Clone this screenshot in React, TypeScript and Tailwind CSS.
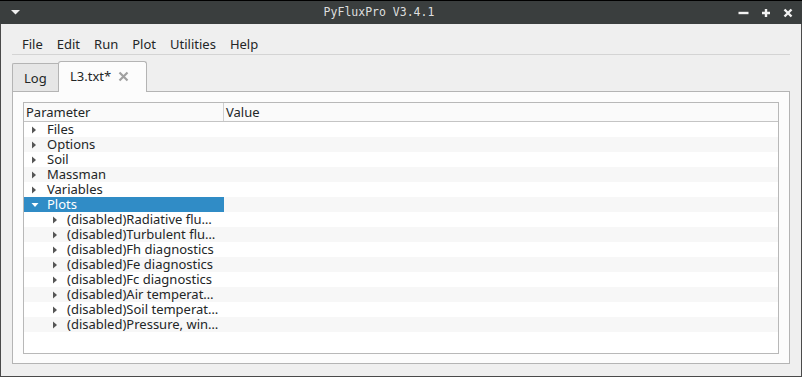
import React from "react";

const topRows = ["Files", "Options", "Soil", "Massman", "Variables"];
const plotRows = [
  "(disabled)Radiative flu…",
  "(disabled)Turbulent flu…",
  "(disabled)Fh diagnostics",
  "(disabled)Fe diagnostics",
  "(disabled)Fc diagnostics",
  "(disabled)Air temperat…",
  "(disabled)Soil temperat…",
  "(disabled)Pressure, win…",
];

function Arrow() {
  return (
    <svg width="8" height="8" viewBox="0 0 8 8" className="shrink-0">
      <path d="M2 0.5 L6 4 L2 7.5 Z" fill="#555555" />
    </svg>
  );
}

function Row({
  label,
  depth,
  alt,
  selected,
  expanded,
}: {
  label: string;
  depth: number;
  alt: boolean;
  selected?: boolean;
  expanded?: boolean;
}) {
  return (
    <div className={`flex h-[15px] ${alt ? "bg-[#f7f7f7]" : "bg-white"}`}>
      <div
        className={`flex h-full w-[200px] items-center ${
          selected ? "bg-[#308cc6] text-white" : "text-[#232627]"
        }`}
      >
        <div
          className={`flex h-full items-center ${
            depth === 0 ? "w-[23px] pl-[6px]" : "w-[43px] pl-[27px]"
          }`}
        >
          {expanded ? (
            <svg width="8" height="8" viewBox="0 0 8 8" className="ml-[1px]">
              <path d="M0.5 2 L7.5 2 L4 6 Z" fill="#ffffff" />
            </svg>
          ) : (
            <Arrow />
          )}
        </div>
        <span className="whitespace-nowrap leading-[15px]">{label}</span>
      </div>
    </div>
  );
}

export default function App() {
  return (
    <div
      className="flex h-[377px] w-[802px] flex-col overflow-hidden bg-[#efefef] text-[13px] text-[#232627]"
      style={{ fontFamily: '"Noto Sans", "DejaVu Sans", sans-serif' }}
    >
      {/* Title bar */}
      <div className="flex h-[24px] shrink-0 items-center border-t border-black bg-[#3a3e3e] pl-[11px] pr-[9px] text-[#dedede]">
        <svg width="9" height="5" viewBox="0 0 9 5">
          <path d="M0 0 L9 0 L4.5 4.5 Z" fill="#f0f0f0" />
        </svg>
        <div
          className="flex-1 text-center text-[11.5px]"
          style={{ fontFamily: '"DejaVu Sans Mono", monospace' }}
        >
          PyFluxPro V3.4.1
        </div>
        <div className="flex items-center gap-[12px]">
          <svg width="11" height="10" viewBox="0 0 11 10">
            <path d="M0.5 5 L10.5 5" stroke="#f2f2f2" strokeWidth="2.4" />
          </svg>
          <svg width="10" height="10" viewBox="0 0 10 10">
            <path d="M1 5 L9 5 M5 1 L5 9" stroke="#f2f2f2" strokeWidth="2.4" />
          </svg>
          <svg width="10" height="10" viewBox="0 0 10 10">
            <path d="M1.5 1.5 L8.5 8.5 M8.5 1.5 L1.5 8.5" stroke="#f2f2f2" strokeWidth="2.4" />
          </svg>
        </div>
      </div>

      <div className="flex flex-1 flex-col border-x border-b border-[#4a4a4a] px-[11px]">
        {/* Menu bar */}
        <div className="flex h-[31px] shrink-0 items-end gap-[14px] border-b border-[#d4d4d4] pl-[10px]">
          {["File", "Edit", "Run", "Plot", "Utilities", "Help"].map((m) => (
            <span key={m} className="leading-[20px]">
              {m}
            </span>
          ))}
        </div>

        {/* Tabs */}
        <div className="flex h-[36px] shrink-0 items-end">
          <div className="flex h-[28px] w-[46px] items-center rounded-tl-[2px] border-l border-t border-[#b4b4b4] bg-[#e6e6e6] pl-[11px] pt-[3px]">
            Log
          </div>
          <div className="relative -mb-px flex h-[31px] w-[89px] items-center rounded-t-[3px] border-x border-t border-[#b4b4b4] bg-[#fcfcfc] pl-[11px]">
            <span>L3.txt*</span>
            <svg width="11" height="11" viewBox="0 0 11 11" className="ml-[7px] -mt-[2px]">
              <path d="M1.5 1.5 L9.5 9.5 M9.5 1.5 L1.5 9.5" stroke="#a0a0a0" strokeWidth="2.2" />
            </svg>
          </div>
        </div>

        {/* Tab panel */}
        <div className="flex h-[273px] shrink-0 flex-col border border-[#b4b4b4] bg-[#fcfcfc] pb-[9px] pl-[10px] pr-[10px] pt-[10px]">
          <div className="flex flex-1 flex-col border border-[#b8b8b8] bg-white">
            <div className="flex h-[19px] shrink-0 border-b border-[#c4c4c4] bg-[#fafafa]">
              <div className="flex w-[200px] items-center border-r border-[#d0d0d0] pl-[2px] pt-px">
                Parameter
              </div>
              <div className="flex items-center pl-[2px] pt-px">Value</div>
            </div>
            {topRows.map((r, i) => (
              <Row key={r} label={r} depth={0} alt={i % 2 === 1} />
            ))}
            <Row label="Plots" depth={0} alt selected expanded />
            {plotRows.map((r, i) => (
              <Row key={r} label={r} depth={1} alt={i % 2 === 1} />
            ))}
          </div>
        </div>
      </div>
    </div>
  );
}
